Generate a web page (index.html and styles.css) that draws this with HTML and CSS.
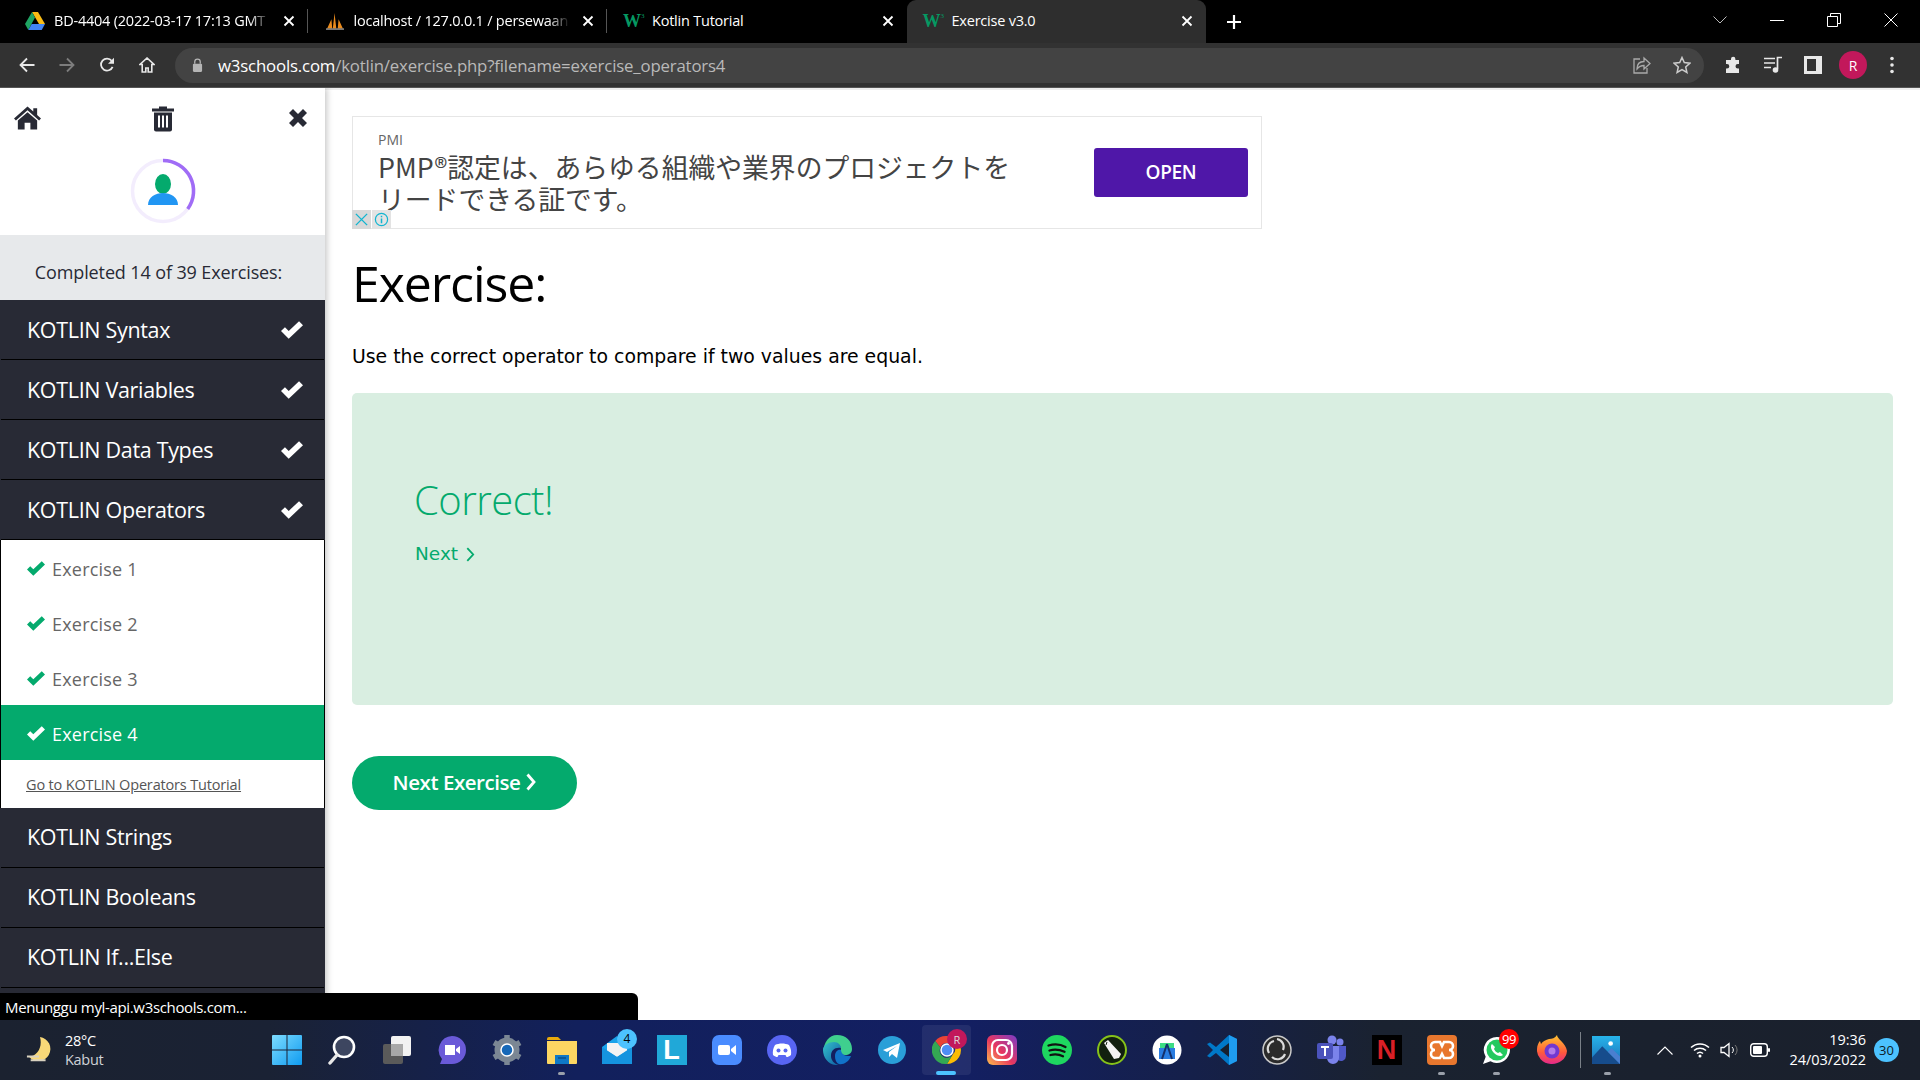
FILE: index.html
```html
<!DOCTYPE html>
<html lang="en">
<head>
<meta charset="utf-8">
<title>Exercise v3.0</title>
<link rel="stylesheet" href="styles.css">
</head>
<body>
<svg class="defs" width="0" height="0" aria-hidden="true">
  <defs>
    <symbol id="tabx" viewBox="0 0 12 12"><path d="M1.5 1.5l9 9M10.5 1.5l-9 9" stroke="#fff" stroke-width="1.8" fill="none"/></symbol>
    <symbol id="chk" viewBox="0 0 20 16"><path d="M7 16L0 9l3.600-3.600L7 8.800 16.400 0 20 3.600z" fill="currentColor"/></symbol>
    <linearGradient id="winb" x1="0" y1="0" x2="1" y2="1"><stop offset="0" stop-color="#7ddcff"/><stop offset="1" stop-color="#0f9bf0"/></linearGradient>
    <linearGradient id="insta" x1="0" y1="1" x2="1" y2="0"><stop offset="0" stop-color="#fdc04c"/><stop offset=".45" stop-color="#e8375f"/><stop offset="1" stop-color="#7a3cc8"/></linearGradient>
    <linearGradient id="edge" x1="0" y1="0" x2="1" y2="1"><stop offset="0" stop-color="#35c1c9"/><stop offset="1" stop-color="#0c59a4"/></linearGradient>
    <linearGradient id="fox" x1="0" y1="0" x2="0" y2="1"><stop offset="0" stop-color="#ffc531"/><stop offset=".6" stop-color="#ff5a3c"/><stop offset="1" stop-color="#e4298c"/></linearGradient>
    <linearGradient id="photo" x1="0" y1="0" x2="0" y2="1"><stop offset="0" stop-color="#27b4ea"/><stop offset="1" stop-color="#1c6fb8"/></linearGradient>
  </defs>
</svg>

<header class="tabstrip">
  <div class="tab">
    <svg class="fav" viewBox="0 0 20 18"><path d="M7 0h6l7 12h-6z" fill="#f9bc15"/><path d="M7 0l3 5.500L3.300 18 0 12z" fill="#1fa463"/><path d="M3.300 18l3.400-6H20l-3.300 6z" fill="#4285f4"/></svg>
    <span class="tab-title fade">BD-4404 (2022-03-17 17:13 GMT</span>
    <svg class="tabclose"><use href="#tabx"/></svg>
  </div>
  <div class="tab sep">
    <svg class="fav" viewBox="0 0 20 20"><path d="M1 19L6 8l1 11zM7.500 19L9.500 1l2 18zM13 19l1-11 5 11z" fill="#e98a1c"/><path d="M0 18h20v2H0z" fill="#777"/></svg>
    <span class="tab-title fade">localhost / 127.0.0.1 / persewaan</span>
    <svg class="tabclose"><use href="#tabx"/></svg>
  </div>
  <div class="tab sep">
    <span class="w3">W<sup>3</sup></span>
    <span class="tab-title">Kotlin Tutorial</span>
    <svg class="tabclose"><use href="#tabx"/></svg>
  </div>
  <div class="tab active">
    <span class="w3">W<sup>3</sup></span>
    <span class="tab-title">Exercise v3.0</span>
    <svg class="tabclose"><use href="#tabx"/></svg>
  </div>
  <svg class="newtab" viewBox="0 0 14 14"><path d="M7 0v14M0 7h14" stroke="#fff" stroke-width="2.200"/></svg>
  <div class="winctl">
    <svg class="wi wi-list" viewBox="0 0 14 8"><path d="M.5.5L7 7 13.500.5" stroke="#bbb" fill="none"/></svg>
    <svg class="wi" viewBox="0 0 14 14"><path d="M0 7.500h14" stroke="#fff"/></svg>
    <svg class="wi" viewBox="0 0 14 14"><path d="M.5 3.500h10v10H.5zM3.500 3.500v-3h10v10h-3" stroke="#fff" fill="none"/></svg>
    <svg class="wi" viewBox="0 0 14 14"><path d="M.5.5l13 13M13.500.5l-13 13" stroke="#fff" fill="none"/></svg>
  </div>
</header>

<nav class="toolbar">
  <svg class="tool" viewBox="0 0 16 16"><path d="M15.500 8H2M8 1.500L1.500 8 8 14.500" stroke="#e8e8e8" stroke-width="1.800" fill="none"/></svg>
  <svg class="tool" viewBox="0 0 16 16"><path d="M.5 8H14M8 1.500L14.500 8 8 14.500" stroke="#7d7d7d" stroke-width="1.800" fill="none"/></svg>
  <svg class="tool" viewBox="0 0 16 16"><path d="M13.600 9.800A6 6 0 1 1 12.700 3.800" stroke="#e8e8e8" stroke-width="1.800" fill="none"/><path d="M15 .8v6H9z" fill="#e8e8e8"/></svg>
  <svg class="tool" viewBox="0 0 16 16"><path d="M8 1L1 7.500h2.200V15h3.600v-4h2.400v4h3.600V7.500H15z" stroke="#e8e8e8" stroke-width="1.600" fill="none"/></svg>
  <div class="omnibox">
    <svg class="lock" viewBox="0 0 12 15"><path d="M3 6V4a3 3 0 0 1 6 0v2" stroke="#b5b5b5" stroke-width="1.400" fill="none"/><rect x="1" y="6" width="10" height="9" rx="1.200" fill="#b5b5b5"/></svg>
    <span class="url"><b>w3schools.com</b>/kotlin/exercise.php?filename=exercise_operators4</span>
    <svg class="omni-ic" viewBox="0 0 18 18"><path d="M7 3H1v14h13v-5" stroke="#aaa" stroke-width="1.300" fill="none"/><path d="M4 13c0-5 3-7.500 7-7.500V2l6 5.500-6 5.500V9.500c-3 0-5 1-7 3.500z" stroke="#aaa" stroke-width="1.300" fill="none"/></svg>
    <svg class="omni-ic" viewBox="0 0 18 18"><path d="M9 1.500l2.300 5.100 5.500.6-4.100 3.700 1.200 5.500L9 13.600l-4.900 2.800 1.200-5.500L1.200 7.200l5.500-.6z" stroke="#ccc" stroke-width="1.500" fill="none"/></svg>
  </div>
  <div class="tool-right">
    <svg class="tool" viewBox="0 0 18 18"><path d="M7 3a2.200 2.200 0 0 1 4.400 0v1H15v4h-1.200a2.300 2.300 0 0 0 0 4.600H15V17H2v-4.400h1a2.300 2.300 0 0 0 0-4.600H2V4h5z" fill="#e8e8e8"/></svg>
    <svg class="tool" viewBox="0 0 18 18"><path d="M0 2.500h11M0 7h11M0 11.500h7M13.500 13V1.500H18" stroke="#e8e8e8" stroke-width="1.700" fill="none"/><circle cx="11.500" cy="14" r="2.800" fill="#e8e8e8"/></svg>
    <svg class="tool" viewBox="0 0 18 18"><path d="M0 0h18v18H0z" fill="#e8e8e8"/><path d="M3 3h9v12H3z" fill="#333"/></svg>
    <span class="avatar">R</span>
    <svg class="tool dots" viewBox="0 0 4 18"><circle cx="2" cy="2.500" r="1.800" fill="#e8e8e8"/><circle cx="2" cy="9" r="1.800" fill="#e8e8e8"/><circle cx="2" cy="15.500" r="1.800" fill="#e8e8e8"/></svg>
  </div>
</nav>

<div class="page">
  <aside class="sidebar">
    <div class="side-head">
      <div class="side-icons">
        <svg class="si-home" viewBox="0 0 28 24"><path d="M14 0L0 12.500l2 2L14 4l12 10.500 2-2-4-3.600V2h-4v3.300z" fill="#282a35"/><path d="M14 6L4 14.500V24h7v-7h6v7h7v-9.500z" fill="#282a35"/></svg>
        <svg class="si-trash" viewBox="0 0 22 26"><path d="M7 3V1h8v2h7v3H0V3z" fill="#282a35"/><path d="M2 7h18v17a2 2 0 0 1-2 2H4a2 2 0 0 1-2-2z" fill="#282a35"/><path d="M6 10h2v12H6zM10 10h2v12h-2zM14 10h2v12h-2z" fill="#fff"/></svg>
        <svg class="si-x" viewBox="0 0 20 20"><path d="M1 5l4-4 5 5 5-5 4 4-5 5 5 5-4 4-5-5-5 5-4-4 5-5z" fill="#282a35"/></svg>
      </div>
      <svg class="progress" viewBox="0 0 66 66">
        <circle cx="33" cy="33" r="30.500" fill="none" stroke="#f3edfd" stroke-width="3.500"/>
        <path d="M33 2.500A30.500 30.500 0 0 1 57.700 51" fill="none" stroke="#a06cf6" stroke-width="3.500"/>
        <ellipse cx="33" cy="26" rx="8" ry="10" fill="#04aa6d"/>
        <path d="M18 47c0-16 30-16 30 0z" fill="#2196f3"/>
      </svg>
    </div>
    <div class="side-progress">Completed 14 of 39 Exercises:</div>
    <ul class="menu">
      <li class="menu-item"><span>KOTLIN Syntax</span><svg class="menu-check"><use href="#chk"/></svg></li>
      <li class="menu-item"><span>KOTLIN Variables</span><svg class="menu-check"><use href="#chk"/></svg></li>
      <li class="menu-item"><span>KOTLIN Data Types</span><svg class="menu-check"><use href="#chk"/></svg></li>
      <li class="menu-item"><span>KOTLIN Operators</span><svg class="menu-check"><use href="#chk"/></svg></li>
      <li class="sub">
        <div class="sub-item"><svg class="sub-check"><use href="#chk"/></svg>Exercise 1</div>
        <div class="sub-item"><svg class="sub-check"><use href="#chk"/></svg>Exercise 2</div>
        <div class="sub-item"><svg class="sub-check"><use href="#chk"/></svg>Exercise 3</div>
        <div class="sub-item current"><svg class="sub-check"><use href="#chk"/></svg>Exercise 4</div>
        <a class="sub-link" href="#">Go to KOTLIN Operators Tutorial</a>
      </li>
      <li class="menu-item lower"><span>KOTLIN Strings</span></li>
      <li class="menu-item lower"><span>KOTLIN Booleans</span></li>
      <li class="menu-item lower"><span>KOTLIN If...Else</span></li>
    </ul>
  </aside>

  <main class="content">
    <div class="ad">
      <div class="ad-copy">
        <div class="ad-brand">PMI</div>
        <div class="ad-text">PMP®認定は、あらゆる組織や業界のプロジェクトを<br>リードできる証です。</div>
      </div>
      <div class="ad-btn">OPEN</div>
      <div class="adchoice">
        <svg class="adc" viewBox="0 0 16 16"><path d="M2 2l12 12M14 2L2 14" stroke="#12b5d0" stroke-width="1.500"/></svg>
        <svg class="adc" viewBox="0 0 16 16"><circle cx="8" cy="8" r="6.500" stroke="#12b5d0" stroke-width="1.300" fill="none"/><path d="M8 4v1.600M8 7v5" stroke="#12b5d0" stroke-width="1.600"/></svg>
      </div>
    </div>
    <h1 class="title">Exercise:</h1>
    <p class="lead">Use the correct operator to compare if two values are equal.</p>
    <section class="result">
      <h2 class="correct">Correct!</h2>
      <a class="next-link" href="#">Next <svg class="chev-s" viewBox="0 0 8 14"><path d="M1 1l5.500 6L1 13" stroke="#04aa6d" stroke-width="1.700" fill="none"/></svg></a>
    </section>
    <a class="next-btn" href="#">Next Exercise <svg class="chev-b" viewBox="0 0 10 18"><path d="M1.500 1.500L8 9l-6.500 7.500" stroke="#fff" stroke-width="2.800" fill="none"/></svg></a>
  </main>

  <div class="status">Menunggu myl-api.w3schools.com...</div>
</div>

<footer class="taskbar">
  <div class="weather">
    <svg class="moon" viewBox="0 0 30 30"><path d="M15 1a13 13 0 1 1-12 21C12 22 18 12 15 1z" fill="#f8d878"/><path d="M1 22h13M5 26h16" stroke="#d9d2c0" stroke-width="2"/></svg>
    <div class="wtext"><div>28°C</div><div class="wdim">Kabut</div></div>
  </div>
  <div class="apps">
    <div class="app"><svg viewBox="0 0 30 30"><path d="M0 1a1 1 0 0 1 1-1h13.500v14.500H0zM15.500 0H29a1 1 0 0 1 1 1v13.500H15.500zM0 15.500h14.500V30H1a1 1 0 0 1-1-1zM15.500 15.500H30V29a1 1 0 0 1-1 1H15.500z" fill="url(#winb)"/></svg></div>
    <div class="app"><svg viewBox="0 0 30 30"><circle cx="17" cy="12" r="10" fill="#3d4660" stroke="#fff" stroke-width="2.600"/><path d="M10 20l-7 8" stroke="#e8e8e8" stroke-width="3.400" stroke-linecap="round"/></svg></div>
    <div class="app"><svg viewBox="0 0 30 30"><rect x="1" y="9" width="20" height="20" rx="2" fill="#5a5a5a"/><rect x="9" y="1" width="20" height="20" rx="2" fill="#f2f2f2"/><rect x="9" y="9" width="12" height="12" fill="#a8a8a8"/></svg></div>
    <div class="app"><svg viewBox="0 0 30 30"><path d="M15 1a14 14 0 0 1 0 28H3l2-5A14 14 0 0 1 15 1z" fill="#6a5ad8"/><path d="M8 10h10v10H8zM19 14l4-3v8l-4-3z" fill="#fff"/></svg></div>
    <div class="app"><svg viewBox="0 0 30 30"><circle cx="15" cy="15" r="9" fill="none" stroke="#7b8794" stroke-width="7"/><path d="M15 0v5M15 25v5M2 7.500l4.300 2.500M23.700 20l4.300 2.500M2 22.500L6.300 20M23.700 10L28 7.500" stroke="#7b8794" stroke-width="5.500"/><circle cx="15" cy="15" r="6" fill="#1668b8" stroke="#fff" stroke-width="1.500"/></svg></div>
    <div class="app running"><svg viewBox="0 0 30 30"><path d="M0 4a2 2 0 0 1 2-2h9l3 3H0z" fill="#e8a90c"/><path d="M0 6h30v22a1 1 0 0 1-1 1H1a1 1 0 0 1-1-1z" fill="#fcd662"/><rect x="8" y="20" width="14" height="9" fill="#0f78c6"/><path d="M11 23h8" stroke="#063a6e"/></svg></div>
    <div class="app"><svg viewBox="0 0 30 30"><path d="M0 12L15 1l15 11v17H0z" fill="#1aa3ea"/><path d="M5 8h20v8l-10 6-10-6z" fill="#f3f3f3"/><path d="M0 12l15 10 15-10v17H0z" fill="#1593df"/></svg><span class="badge badge-blue">4</span></div>
    <div class="app"><span class="tile-l">L</span></div>
    <div class="app"><svg viewBox="0 0 30 30"><rect width="30" height="30" rx="7" fill="#4a8cff"/><rect x="6" y="10" width="12" height="10" rx="2" fill="#fff"/><path d="M19 14l5-4v10l-5-4z" fill="#fff"/></svg></div>
    <div class="app"><svg viewBox="0 0 30 30"><circle cx="15" cy="15" r="15" fill="#5865f2"/><path d="M8 10c4-2 10-2 14 0 2 3 2.500 7 2 10-2 1.500-3 2-4.500 2l-1-2h-7l-1 2c-1.500 0-2.500-.5-4.500-2-.5-3 0-7 2-10z" fill="#fff"/><circle cx="11.500" cy="15.500" r="2" fill="#5865f2"/><circle cx="18.500" cy="15.500" r="2" fill="#5865f2"/></svg></div>
    <div class="app"><svg viewBox="0 0 30 30"><path d="M15 0c9 0 15 6 15 14 0 4-3 6-7 6-3 0-5-1-5-3 0-1 1-1 1-3 0-3-3-5-6-5-6 0-11 4-12 8C2 7 7 0 15 0z" fill="#3fcf8e"/><path d="M1 15c0-5 6-8 11-8 4 0 7 3 7 6-6-1-10 2-10 8 0 4 3 8 8 9-9 1-16-6-16-15z" fill="url(#edge)"/><path d="M13 21c0-4 3-7 6-6 0 3 3 6 7 6h3c-2 6-8 9-12 8-3-1-4-5-4-8z" fill="#1173c9"/></svg></div>
    <div class="app"><svg viewBox="0 0 30 30"><circle cx="15" cy="15" r="14" fill="#2a9fd8"/><path d="M6 15l17-7-3 15-5-4-3 3v-5l8-6-10 6z" fill="#fff"/></svg></div>
    <div class="app active-app"><svg viewBox="0 0 30 30"><path d="M15 1a14 14 0 0 1 12.100 7H15a7 7 0 0 0-6.500 4.400L3.200 6A14 14 0 0 1 15 1z" fill="#ea4335"/><path d="M27.100 8A14 14 0 0 1 15 29l6-10a7 7 0 0 0-.5-11z" fill="#fbbc04"/><path d="M3.200 6A14 14 0 0 0 15 29l6-10a7 7 0 0 1-12.500-6.600z" fill="#34a853"/><circle cx="15" cy="15" r="6" fill="#4f8df5" stroke="#fff" stroke-width="1.500"/></svg><span class="badge badge-r">R</span></div>
    <div class="app"><svg viewBox="0 0 30 30"><rect width="30" height="30" rx="6" fill="url(#insta)"/><rect x="5" y="5" width="20" height="20" rx="6" fill="none" stroke="#fff" stroke-width="2.200"/><circle cx="15" cy="15" r="5" fill="none" stroke="#fff" stroke-width="2.200"/><circle cx="21.500" cy="8.500" r="1.400" fill="#fff"/></svg></div>
    <div class="app"><svg viewBox="0 0 30 30"><circle cx="15" cy="15" r="15" fill="#1ed760"/><path d="M6.500 10.500c6-1.800 12-1.300 17 1.500M7.500 15.500c5-1.400 10-1 15 1.300M8.500 20c4-1 8.500-.8 12.500 1.300" stroke="#111" stroke-width="2.300" fill="none" stroke-linecap="round"/></svg></div>
    <div class="app"><svg viewBox="0 0 30 30"><circle cx="15" cy="15" r="14" fill="#12200f" stroke="#86c21a" stroke-width="2"/><path d="M7 8l4-3 13 14-2 4-5 1z" fill="#f4f4f4"/><path d="M10 7l-1 3" stroke="#12200f"/></svg></div>
    <div class="app"><svg viewBox="0 0 30 30"><circle cx="15" cy="15" r="14.500" fill="#fff"/><path d="M8 8h14v6H8z" fill="#3ddc84"/><path d="M7 13h16v11H7z" fill="#2a7de1"/><path d="M15 9l-5 15M15 9l5 15" stroke="#14306c" stroke-width="2"/></svg></div>
    <div class="app"><svg viewBox="0 0 30 30"><path d="M22 0l8 4v22l-8 4-13-12-6 4.500L0 21l6-6-6-6 3-1.500L9 12z" fill="#0078c8"/><path d="M22 8v14l-9-7z" fill="#16202e"/><path d="M22 0l8 4v22l-8 4z" fill="#1f9cf0"/></svg></div>
    <div class="app"><svg viewBox="0 0 30 30"><circle cx="15" cy="15" r="14" fill="#2b2b2b" stroke="#c9c9c9" stroke-width="1.500"/><path d="M15 4a8 8 0 0 1 6 11M23 19a8 8 0 0 1-13 3M7 18a8 8 0 0 1 5-12" stroke="#dcdcdc" stroke-width="2.200" fill="none"/></svg></div>
    <div class="app"><svg viewBox="0 0 30 30"><circle cx="23" cy="7" r="3.500" fill="#7b83eb"/><circle cx="15" cy="5" r="4.500" fill="#7b83eb"/><path d="M18 11h11v10a5 5 0 0 1-8 4z" fill="#5059c9"/><path d="M8 11h14v12a6 6 0 0 1-12 0z" fill="#7b83eb"/><rect x="0" y="8" width="16" height="16" rx="2" fill="#4b53bc"/><path d="M4 12h8M8 12v9" stroke="#fff" stroke-width="2"/></svg></div>
    <div class="app"><span class="tile-n">N</span></div>
    <div class="app running"><svg viewBox="0 0 30 30"><rect width="30" height="30" rx="4" fill="#e8772e"/><path d="M8 7h5l2 4 2-4h5a3 3 0 0 1 0 8 3 3 0 0 1 0 8h-5l-2-4-2 4H8a3 3 0 0 1 0-8 3 3 0 0 1 0-8z" fill="none" stroke="#fff" stroke-width="2.600"/></svg></div>
    <div class="app running"><svg viewBox="0 0 30 30"><path d="M15 2a13 13 0 1 1-6.500 24.300L1 29l2.700-7.300A13 13 0 0 1 15 2z" fill="#fff"/><circle cx="15" cy="15" r="10.500" fill="#25c95f"/><path d="M10 9c-2 2-1 6 2 9s7 4 9 2l-3-3-2 1c-2-1-3-2-4-4l1-2z" fill="#fff"/></svg><span class="badge badge-red">99</span></div>
    <div class="app"><svg viewBox="0 0 30 30"><path d="M20 0c0 4 9 8 10 16A15 14 0 1 1 0 14c0-4 2-7 3-8l1 3c2-3 5-4 8-5 3 0 6-1 8-4z" fill="url(#fox)"/><circle cx="15" cy="16" r="7.500" fill="#7138d0"/><circle cx="15" cy="16" r="3.500" fill="#b27be8"/></svg></div>
    <div class="app-sep"></div>
    <div class="app running photos"><svg viewBox="0 0 30 30"><rect width="30" height="30" fill="url(#photo)"/><circle cx="20" cy="8" r="2.500" fill="#fff"/><path d="M0 23l11-12 19 19H0z" fill="#164c8c"/><path d="M17 17l4-4 9 9v8z" fill="#4a7fd0"/></svg></div>
  </div>
  <div class="tray">
    <svg class="t-chev" viewBox="0 0 16 9"><path d="M.5 8.500L8 1l7.500 7.500" stroke="#fff" stroke-width="1.100" fill="none"/></svg>
    <svg class="t-wifi" viewBox="0 0 20 16"><path d="M1 5.500a13 13 0 0 1 18 0M4 8.500a9 9 0 0 1 12 0M7 11.500a4.500 4.500 0 0 1 6 0" stroke="#fff" stroke-width="1.500" fill="none"/><circle cx="10" cy="14" r="1.500" fill="#fff"/></svg>
    <svg class="t-vol" viewBox="0 0 20 16"><path d="M1 5.500h3L9 1.500v13l-5-4H1z" stroke="#fff" stroke-width="1.300" fill="none"/><path d="M12 5a4 4 0 0 1 0 6" stroke="#fff" fill="none"/><path d="M15 3a7 7 0 0 1 0 10" stroke="#777" fill="none"/></svg>
    <svg class="t-bat" viewBox="0 0 20 14"><rect x=".7" y=".7" width="16.600" height="12.600" rx="3" stroke="#fff" stroke-width="1.400" fill="none"/><rect x="3" y="3" width="9" height="8" rx="1" fill="#fff"/><rect x="18" y="5" width="2" height="4" rx="1" fill="#fff"/></svg>
    <div class="clock"><div>19:36</div><div>24/03/2022</div></div>
    <span class="notif">30</span>
  </div>
</footer>
</body>
</html>
```

FILE: styles.css
```css
* { box-sizing: border-box; }
html, body { height: 100%; margin: 0; }
body {
  display: flex;
  flex-direction: column;
  height: 1080px;
  overflow: hidden;
  font-family: "Open Sans", "Noto Sans", sans-serif;
  background: #fff;
}
.defs { position: absolute; }

/* Browser chrome */
.tabstrip {
  height: 43px;
  background: #000;
  display: flex;
  align-items: stretch;
  padding-left: 8px;
  color: #fff;
  flex: none;
}
.tab {
  width: 299.500px;
  display: flex;
  align-items: center;
  padding: 0 13px 2px 17px;
  position: relative;
}
.tab.sep::before {
  content: "";
  position: absolute;
  left: -1px;
  top: 9px;
  height: 24px;
  width: 1px;
  background: #555;
}
.tab.active {
  background: #2e2e2e;
  border-radius: 9px 9px 0 0;
}
.fav { width: 20px; height: 18px; flex: none; margin-right: 9px; }
.w3 {
  font-family: "Liberation Serif", serif;
  font-weight: 700;
  font-size: 18px;
  line-height: 1;
  color: #059862;
  width: 29px;
  flex: none;
  margin-left: -1px;
  margin-right: 0;
}
.w3 sup { font-size: 7px; font-weight: 400; vertical-align: 9px; line-height: 0; }
.tab-title {
  flex: 1;
  font-size: 14.500px;
  letter-spacing: -.22px;
  white-space: nowrap;
  overflow: hidden;
}
.fade { -webkit-mask-image: linear-gradient(to right, #000 90%, transparent); mask-image: linear-gradient(to right, #000 90%, transparent); }
.tabclose { width: 12px; height: 12px; flex: none; margin-left: 12px; }
.newtab { width: 14px; height: 14px; align-self: center; margin: 0 0 0 21px; flex: none; }
.winctl {
  margin-left: auto;
  display: flex;
  align-items: center;
  gap: 43px;
  padding: 0 22px 4px 0;
}
.wi { width: 14px; height: 14px; display: block; }

.toolbar {
  height: 45px;
  background: #323232;
  border-bottom: 1px solid #555;
  display: flex;
  align-items: center;
  padding: 0 0 0 19px;
  gap: 24px;
  flex: none;
}
.tool { width: 16px; height: 16px; flex: none; }
.omnibox {
  margin-left: -4px;
  flex: none;
  width: 1529px;
  height: 35px;
  border-radius: 18px;
  background: #434343;
  display: flex;
  align-items: center;
  padding: 0 13px 0 17px;
  color: #b9b9b9;
}
.lock { width: 11px; height: 14px; flex: none; margin-right: 15px; }
.url {
  font-size: 16.800px;
  letter-spacing: -.17px;
  flex: 1;
  white-space: nowrap;
}
.url b { font-weight: 400; color: #fff; }
.omni-ic { width: 18px; height: 18px; flex: none; margin-left: 22px; }
.tool-right {
  display: flex;
  align-items: center;
  gap: 22px;
  margin-left: -4px;
}
.tool-right .tool { width: 18px; height: 18px; }
.avatar {
  width: 28px;
  height: 28px;
  margin: 0 -5px;
  border-radius: 50%;
  background: #c2185b;
  color: #fff;
  font-size: 14px;
  display: flex;
  align-items: center;
  justify-content: center;
}
.tool-right .dots { width: 4px; margin-left: 6px; }

/* Page */
.page {
  flex: 1;
  min-height: 0;
  display: flex;
  position: relative;
  overflow: hidden;
}
.sidebar {
  width: 325px;
  flex: none;
  background: #282a35;
  box-shadow: 2px 0 6px rgba(0,0,0,.22);
  position: relative;
  z-index: 1;
}
.side-head {
  height: 147px;
  background: #fff;
  padding-top: 15px;
  display: flex;
  flex-direction: column;
  align-items: center;
}
.side-icons {
  width: 100%;
  display: flex;
  justify-content: space-between;
  align-items: center;
  padding: 0 17px 0 14px;
  height: 30px;
}
.si-home { width: 27px; height: 24px; }
.si-trash { width: 22px; height: 27px; margin-right: 4px; }
.si-x { width: 20px; height: 20px; }
.progress { width: 66px; height: 66px; margin-top: 25px; }
.side-progress {
  height: 65px;
  background: #e7e9eb;
  display: flex;
  align-items: center;
  justify-content: center;
  color: #282a35;
  font-size: 18px;
  letter-spacing: -.12px;
  padding: 8px 8px 0 0;
}
.menu { list-style: none; margin: 0; padding: 0; }
.menu-item {
  height: 60px;
  display: flex;
  align-items: center;
  justify-content: space-between;
  padding: 0 21px 0 26px;
  color: #fff;
  font-size: 21.500px;
  letter-spacing: -.32px;
  border-bottom: 1px solid #000;
  margin: 0 1px;
}
.menu-item.lower { padding-bottom: 2px; }
.menu-check { width: 22px; height: 18px; color: #fff; }
.sub { background: #fff; border: 1px solid #000; border-top: 0; border-bottom: 0; }
.sub-item {
  height: 55px;
  display: flex;
  align-items: center;
  padding: 2px 0 0 26px;
  font-size: 18px;
  letter-spacing: .2px;
  color: #666;
}
.sub-check { width: 18px; height: 15px; color: #04aa6d; margin-right: 7px; flex: none; }
.sub-item.current { background: #04aa6d; color: #fff; }
.sub-item.current .sub-check { color: #fff; }
.sub-link {
  display: flex;
  align-items: center;
  height: 48px;
  padding-left: 25px;
  font-size: 14.500px;
  letter-spacing: -.16px;
  color: #555;
}

.content {
  flex: 1;
  min-width: 0;
  padding: 28px 27px 0;
  border-top: 2px solid #eee;
}
.ad {
  width: 910px;
  height: 113px;
  border: 1px solid #e6e6e6;
  display: flex;
  align-items: center;
  justify-content: space-between;
  padding: 0 13px 0 25px;
  position: relative;
  margin-top: -2px;
}
.ad-copy { padding-top: 2px; }
.ad-brand { font-size: 14px; color: #666; line-height: 16px; margin-bottom: 3px; }
.ad-text {
  font-family: "Noto Sans CJK JP", "Noto Sans", sans-serif;
  font-size: 26.800px;
  line-height: 32px;
  color: #444;
  white-space: nowrap;
}
.ad-btn {
  width: 154px;
  height: 49px;
  background: #4f17a8;
  border-radius: 3px;
  color: #fff;
  font-size: 19px;
  font-weight: 600;
  display: flex;
  align-items: center;
  justify-content: center;
  letter-spacing: -.3px;
  padding-bottom: 2px;
}
.adchoice { position: absolute; left: -1px; bottom: -1px; display: flex; gap: 1px; }
.adc { width: 19px; height: 19px; padding: 2px; background: #d8d8d8; display: block; }
.adc + .adc { background: #e3e3e3; }
.title {
  margin: 20px 0 0;
  font-size: 50px;
  line-height: 68px;
  font-weight: 400;
  color: #000;
  letter-spacing: -1.100px;
}
.lead {
  margin: 27px 0 0;
  font-family: "DejaVu Sans", sans-serif;
  font-size: 18.850px;
  line-height: 26px;
  color: #000;
}
.result {
  margin-top: 23px;
  height: 312px;
  background: #d9eee1;
  border-radius: 5px;
  padding: 79px 62px 0;
}
.correct {
  margin: 0;
  font-size: 40px;
  font-weight: 300;
  line-height: 56px;
  color: #04aa6d;
  letter-spacing: -.55px;
}
.next-link {
  display: flex;
  align-items: center;
  gap: 8px;
  margin-top: 13px;
  padding-left: 1px;
  font-family: "DejaVu Sans", sans-serif;
  font-size: 18.500px;
  line-height: 26px;
  color: #04aa6d;
  text-decoration: none;
}
.chev-s { width: 9px; height: 15px; }
.next-btn {
  margin-top: 51px;
  width: 225px;
  height: 54px;
  border-radius: 27px;
  background: #04aa6d;
  color: #fff;
  font-size: 20.500px;
  font-weight: 600;
  letter-spacing: -.45px;
  display: flex;
  align-items: center;
  justify-content: center;
  gap: 6px;
  padding-bottom: 2px;
  text-decoration: none;
}
.chev-b { width: 10px; height: 18px; }
.status {
  position: absolute;
  left: 0;
  bottom: 0;
  z-index: 2;
  width: 638px;
  height: 27px;
  background: #000;
  color: #fff;
  border-radius: 0 6px 0 0;
  font-size: 15px;
  letter-spacing: -.34px;
  padding-left: 5px;
  display: flex;
  align-items: center;
}

/* Taskbar */
.taskbar {
  height: 60px;
  flex: none;
  display: flex;
  align-items: center;
  position: relative;
  color: #fff;
  background: linear-gradient(90deg, #1b2230 0%, #1a2234 14%, #12205c 30%, #131f62 50%, #15204a 62%, #1a2230 72%, #1a202c 100%);
}
.weather { width: 258px; padding-left: 26px; display: flex; align-items: center; flex: none; }
.moon { width: 28px; height: 30px; margin-right: 11px; flex: none; }
.wtext { font-size: 14.500px; line-height: 19px; letter-spacing: -.3px; }
.wdim { color: #cfd2d8; }
.apps { display: flex; align-items: stretch; height: 60px; flex: none; margin-left: 1px; }
.app {
  width: 55px;
  display: flex;
  align-items: center;
  justify-content: center;
  position: relative;
  flex: none;
}
.app svg { width: 30px; height: 30px; display: block; }
.app.running::after {
  content: "";
  position: absolute;
  bottom: 5px;
  left: 24px;
  width: 7px;
  height: 3px;
  border-radius: 2px;
  background: #9aa0aa;
}
.active-app::before {
  content: "";
  position: absolute;
  left: 3px;
  right: 3px;
  top: 5px;
  bottom: 5px;
  border-radius: 4px;
  background: rgba(255,255,255,.07);
}
.active-app svg { position: relative; }
.active-app::after {
  content: "";
  position: absolute;
  bottom: 5px;
  left: 17px;
  width: 20px;
  height: 4px;
  border-radius: 2px;
  background: #4cc2ff;
}
.badge {
  position: absolute;
  border-radius: 50%;
  display: flex;
  align-items: center;
  justify-content: center;
  font-size: 12px;
  line-height: 1;
}
.badge-blue { width: 20px; height: 20px; top: 9px; right: 7px; background: #4cc2ff; color: #000; }
.badge-r { width: 20px; height: 20px; top: 9px; right: 7px; background: #c2185b; color: #ddd; font-size: 11px; }
.badge-red { width: 20px; height: 20px; top: 9px; right: 5px; background: #f00; color: #fff; font-size: 13px; letter-spacing: -.5px; }
.tile-l {
  width: 30px; height: 30px;
  background: #20a8d8;
  color: #fff;
  font-family: "Liberation Sans", sans-serif;
  font-size: 27px;
  font-weight: 700;
  display: flex;
  align-items: center;
  justify-content: center;
}
.tile-n {
  width: 30px; height: 30px;
  background: #000;
  color: #d81f26;
  font-family: "Liberation Sans", sans-serif;
  font-size: 27px;
  font-weight: 700;
  display: flex;
  align-items: center;
  justify-content: center;
}
.app-sep { width: 1px; height: 36px; background: #7a8088; align-self: center; margin: 0 -1px 0 1px; }
.photos { width: 52px; }
.photos svg { width: 28px; }
.tray {
  margin-left: auto;
  display: flex;
  align-items: center;
  padding-right: 21px;
  flex: none;
}
.t-chev { width: 16px; height: 9px; margin-right: 17px; }
.t-wifi { width: 20px; height: 16px; margin-right: 10.500px; }
.t-vol { width: 20px; height: 16px; margin-right: 9.500px; }
.t-bat { width: 20px; height: 14px; margin-right: 20px; }
.clock { text-align: right; font-size: 14.500px; line-height: 20px; letter-spacing: -.05px; margin-right: 8px; }
.notif {
  width: 25px;
  height: 24px;
  border-radius: 50%;
  background: #4cc2ff;
  color: #0c1a24;
  font-size: 13px;
  display: flex;
  align-items: center;
  justify-content: center;
}
```
